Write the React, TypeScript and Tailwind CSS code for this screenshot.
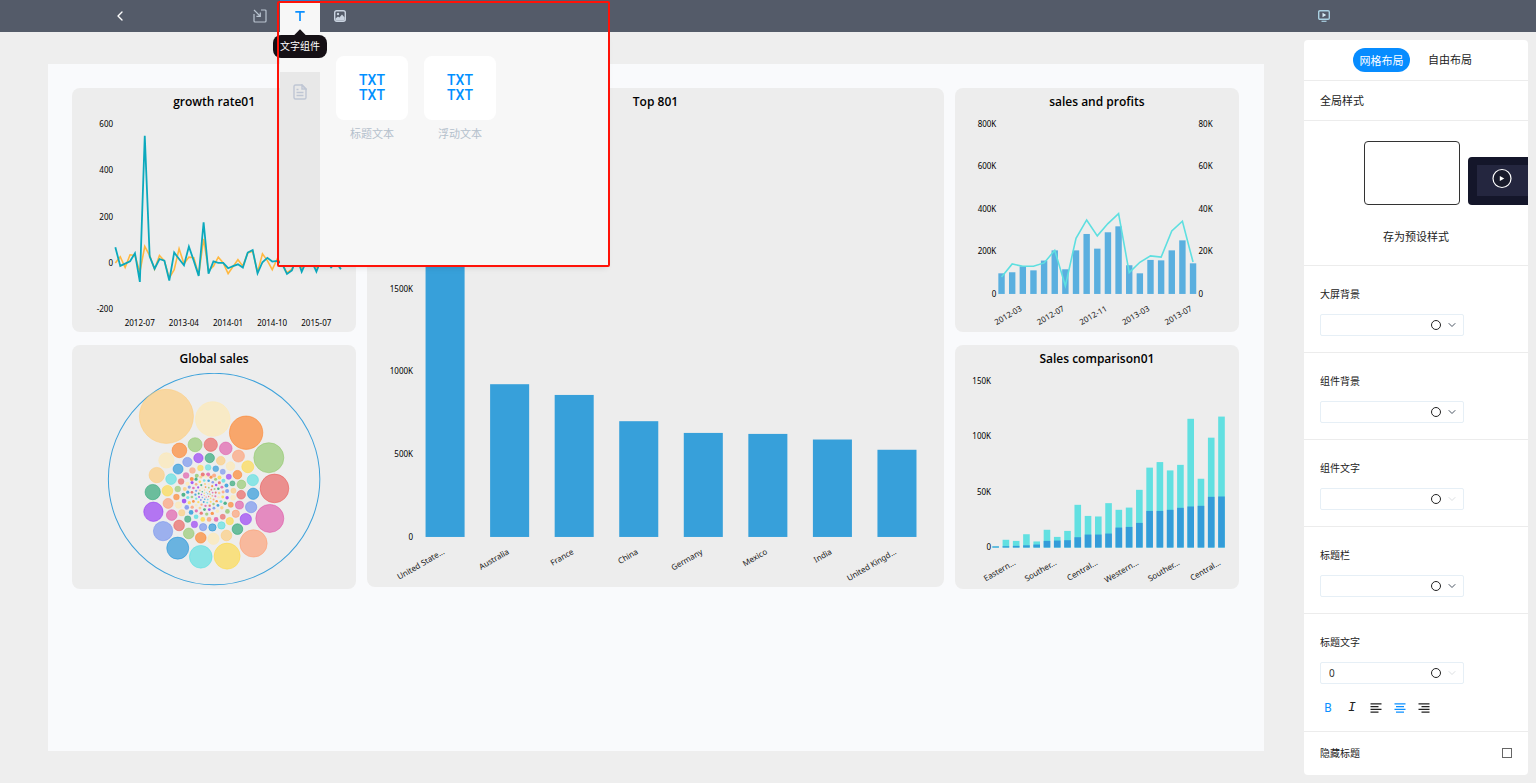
import clsx from "clsx";
import { FiChevronDown, FiChevronLeft } from "react-icons/fi";

const growthSales = [
  68, -13, -3, 7, 42, -82, 550, 29, -25, 17, 10, -76, 45, 17, -10, 71, 9, -56,
  176, -46, 7, 0, 0, -23, -14, -6, -20, 45, 56, -45, 3, 22, 6, 9, -3, -48, -33,
  25, -38, 10, 10, -38, 17, 10, -19, 2, -27,
];

const growthProfit = [
  0, 27, -20, 35, 32, -40, 72, 32, -27, 32, 9, -65, -29, 61, -4, 25, 22, -52,
  104, -33, -14, 25, 0, -46, -16, 14, -14, 43, 51, -40, 39, 10, -29, 17, -3,
  -43, -27, 20, -20, 15, 12, -20, 20, 12, -10, 8, -20,
];

const countries = [
  { name: "United State...", sales: 2490 },
  { name: "Australia", sales: 925 },
  { name: "France", sales: 860 },
  { name: "China", sales: 701 },
  { name: "Germany", sales: 630 },
  { name: "Mexico", sales: 624 },
  { name: "India", sales: 590 },
  { name: "United Kingd...", sales: 528 },
];

const monthlySales = [
  97, 102, 130, 111, 157, 205, 116, 205, 282, 213, 290, 318, 135, 97, 160, 158,
  205, 252, 144,
];

const monthlyProfit = [
  8, 14.1, 13, 13, 14.6, 20.5, 3.8, 26.2, 34.8, 27.3, 33.1, 37.8, 10, 14.9,
  17.9, 17.3, 29.6, 34.2, 15,
];

const regionTotal = [
  1, 7, 6, 12, 5.5, 16, 9.6, 15, 38.5, 28.5, 28, 40, 34, 36, 52, 72, 77, 69.5,
  74.5, 116, 62, 99, 118,
];

const regionBase = [
  1, 1.2, 1.5, 2, 2.7, 6, 6.3, 6.6, 9.3, 11.7, 11.7, 12.6, 18, 18.6, 22.2, 33,
  33, 34, 35.8, 37, 37.6, 45.7, 46,
];

const bubbleColors = [
  "#ffc972",
  "#ffe9ae",
  "#ff7b1c",
  "#8cc665",
  "#ea5654",
  "#de4fa5",
  "#ff9a6c",
  "#ffd93f",
  "#4fdfe0",
  "#1890d8",
  "#6b8aef",
  "#8f2cf5",
  "#1ba06b",
];

// [x, y, r], from the biggest bubble inwards
const bubbles = [
  [199, 229, 81], [338, 237, 52], [438, 278, 50], [506, 353, 45],
  [523, 445, 43], [509, 535, 42], [460, 610, 41], [381, 648, 39],
  [302, 650, 34], [233, 624, 33], [189, 573, 29], [160, 515, 29],
  [158, 456, 23], [170, 405, 23], [199, 361, 23], [238, 331, 22],
  [285, 314, 21], [332, 314, 20], [377, 325, 19], [415, 348, 18],
  [443, 380, 18], [458, 420, 17], [459, 461, 17], [453, 501, 17],
  [437, 537, 17], [412, 567, 16], [379, 586, 16], [340, 596, 17],
  [302, 593, 16], [266, 580, 16], [237, 556, 16], [215, 525, 16],
  [204, 490, 15], [202, 452, 16], [213, 417, 16], [234, 387, 15],
  [262, 366, 14], [295, 354, 14], [329, 354, 14], [362, 362, 13],
  [391, 378, 13], [412, 404, 13], [424, 433, 13], [423, 464, 13],
  [418, 495, 12], [407, 521, 11], [389, 543, 11], [364, 556, 11],
  [337, 562, 11], [309, 561, 11], [283, 553, 10], [263, 537, 10],
  [245, 518, 10], [235, 495, 10], [229, 471, 9], [233, 447, 9],
  [243, 424, 9], [258, 406, 9], [277, 391, 9], [301, 384, 9],
  [324, 382, 9], [347, 386, 9], [368, 395, 8], [386, 410, 8],
  [397, 430, 8], [400, 452, 8], [399, 473, 8], [392, 494, 8],
  [382, 514, 7], [368, 530, 8], [348, 538, 7], [327, 538, 7],
  [308, 538, 7], [288, 530, 7], [273, 517, 7], [260, 502, 7],
  [252, 483, 7], [250, 464, 6], [254, 447, 6], [262, 431, 6],
  [275, 417, 6], [290, 407, 6], [308, 403, 6], [324, 403, 6],
  [342, 406, 6], [358, 412, 6], [370, 422, 6], [379, 436, 6],
  [381, 453, 6],
];

// the tail of the list winds to the centre in ever shorter turns
let angle = 0.18;
let dist = 63;
while (dist > 3) {
  bubbles.push([
    319 + dist * Math.cos(angle),
    462 + dist * Math.sin(angle),
    1.4 + dist * 0.06,
  ]);
  const step = (6.5 + dist * 0.17) / dist;
  angle += step;
  dist -= ((6 + dist * 0.13) * step) / (2 * Math.PI);
}

const AxisText = ({ x, y, anchor = "end", rotate = false, children }: any) => (
  <text
    x={x}
    y={y}
    textAnchor={anchor}
    transform={rotate ? `rotate(-30 ${x} ${y})` : undefined}
    className={clsx("text-[8px]", rotate ? "fill-[#222]" : "fill-black")}
  >
    {children}
  </text>
);

const ChartCard = ({ title, className, viewBox, children }: any) => (
  <section
    className={clsx("self-start rounded-lg bg-[#ededed] overflow-hidden", className)}
  >
    <h3 className="text-center font-['Open_Sans'] text-xs leading-7 font-semibold text-black">
      {title}
    </h3>
    <svg viewBox={viewBox} className="block w-full h-auto">
      {children}
    </svg>
  </section>
);

const growthPoints = (data: number[]) =>
  data.map((v, i) => `${43.3 + i * 4.9},${146.8 - v * 0.231}`).join(" ");

const GrowthChart = () => (
  <ChartCard title="growth rate01" viewBox="0 0 284 216">
    {[600, 400, 200, 0, -200].map((v) => (
      <AxisText key={v} x={41} y={149.8 - v * 0.231}>
        {v}
      </AxisText>
    ))}
    {["2012-07", "2013-04", "2014-01", "2014-10", "2015-07"].map((d, i) => (
      <AxisText key={d} x={67.7 + i * 44.1} y={209.6} anchor="middle">
        {d}
      </AxisText>
    ))}
    <polyline
      points={growthPoints(growthProfit)}
      fill="none"
      stroke="#ffb840"
      strokeWidth="1.6"
    />
    <polyline
      points={growthPoints(growthSales)}
      fill="none"
      stroke="#0ba9bd"
      strokeWidth="1.8"
    />
  </ChartCard>
);

const TopChart = () => (
  <ChartCard
    title="Top 801"
    viewBox="0 0 576 471"
    className="col-start-2 row-start-1 row-span-2"
  >
    {[2500, 2000, 1500, 1000, 500, 0].map((v) => (
      <AxisText key={v} x={46} y={423.2 - v * 0.165}>
        {v ? `${v}K` : 0}
      </AxisText>
    ))}
    {countries.map((c, i) => (
      <g key={c.name}>
        <rect
          x={58.5 + i * 64.5}
          y={420.6 - c.sales * 0.165}
          width="39"
          height={c.sales * 0.165}
          fill="#37a0da"
        />
        <AxisText x={78 + i * 64.5} y={437} rotate>
          {c.name}
        </AxisText>
      </g>
    ))}
  </ChartCard>
);

const ProfitChart = () => (
  <ChartCard title="sales and profits" viewBox="0 0 284 216">
    {[800, 600, 400, 200, 0].map((v) => (
      <g key={v}>
        <AxisText x={41.3} y={180.8 - v * 0.2125}>
          {v ? `${v}K` : 0}
        </AxisText>
        <AxisText x={243.3} y={180.8 - v * 0.2125} anchor="start">
          {v ? `${v / 10}K` : 0}
        </AxisText>
      </g>
    ))}
    {monthlySales.map((v, i) => (
      <rect
        key={i}
        x={43.3 + i * 10.63}
        y={177.8 - v * 0.2125}
        width="6.4"
        height={v * 0.2125}
        fill="#5aafdf"
      />
    ))}
    <polyline
      points={monthlyProfit
        .map((v, i) => `${46.5 + i * 10.63},${177.8 - v * 2.125}`)
        .join(" ")}
      fill="none"
      stroke="#5edfe0"
      strokeWidth="1.6"
    />
    {["2012-03", "2012-07", "2012-11", "2013-03", "2013-07"].map((d, i) => (
      <AxisText key={d} x={67.5 + i * 42.5} y={194} rotate>
        {d}
      </AxisText>
    ))}
  </ChartCard>
);

const ComparisonChart = () => (
  <ChartCard title="Sales comparison01" viewBox="0 0 284 216">
    {[150, 100, 50, 0].map((v) => (
      <AxisText key={v} x={36} y={177 - v * 1.109}>
        {v ? `${v}K` : 0}
      </AxisText>
    ))}
    {regionTotal.map((v, i) => (
      <g key={i}>
        <rect
          x={37.3 + i * 10.257}
          y={174.4 - v * 1.109}
          width="6.6"
          height={v * 1.109}
          fill="#62e0e1"
        />
        <rect
          x={37.3 + i * 10.257}
          y={174.4 - regionBase[i] * 1.109}
          width="6.6"
          height={regionBase[i] * 1.109}
          fill="#349cd9"
        />
      </g>
    ))}
    {["Eastern...", "Souther...", "Central...", "Western...", "Souther...", "Central..."].map(
      (r, i) => (
        <AxisText key={i} x={61 + i * 41} y={191} rotate>
          {r}
        </AxisText>
      )
    )}
  </ChartCard>
);

const BubbleChart = () => (
  <ChartCard title="Global sales" viewBox="0 0 284 216">
    <g transform="translate(28 -33) scale(0.3333)">
      <circle cx="342" cy="417" r="317" fill="none" stroke="#3da2db" strokeWidth="3" />
      {bubbles.map(([x, y, r], i) => (
        <circle
          key={i}
          cx={x}
          cy={y}
          r={r}
          fill={bubbleColors[i % 13]}
          fillOpacity={r > 7 ? 0.62 : 0.75}
          stroke={r > 7 ? bubbleColors[i % 13] : "none"}
          strokeOpacity="0.6"
          strokeWidth={r > 10 ? 2.5 : 1}
        />
      ))}
    </g>
  </ChartCard>
);

const ImportIcon = () => (
  <svg viewBox="0 0 14 14" className="w-3.5 h-3.5" fill="none" stroke="#b9c4d0" strokeWidth="1.2">
    <path d="M1 5v7q0 1 1 1h10q1 0 1-1V2q0-1-1-1H8" />
    <path d="M1 1l6 6M7.3 3.4v3.9H3.4" />
  </svg>
);

const PictureIcon = () => (
  <svg viewBox="0 0 12 12" className="w-3 h-3">
    <rect x="0.7" y="0.7" width="10.6" height="10.6" rx="2" fill="none" stroke="#c9d3e0" strokeWidth="1.4" />
    <circle cx="4" cy="4" r="1.2" fill="#c9d3e0" />
    <path d="M1.5 10.5V8.6L4 6.4l1.4 1.2L8 4.4l2.6 3v3.1z" fill="#c9d3e0" />
  </svg>
);

const PresentIcon = () => (
  <svg viewBox="0 0 12 12" className="w-3 h-3">
    <rect x="0.7" y="0.7" width="10.6" height="8.6" rx="1.2" fill="none" stroke="#a9cfe0" strokeWidth="1.4" />
    <path d="M4.5 2.8L8.2 5 4.5 7.2z" fill="#d7ecf5" />
    <path d="M3.5 11.3h5" stroke="#a9cfe0" strokeWidth="1.2" />
  </svg>
);

const DocIcon = () => (
  <svg viewBox="0 0 14 16" className="w-3.5 h-4" fill="none" stroke="#bfc6d4" strokeWidth="1.4">
    <path d="M9 1H2.5Q1 1 1 2.5v11Q1 15 2.5 15h9q1.5 0 1.5-1.5V5z" />
    <path d="M9 1l4 4H9zM3.5 5.5h2M3.5 8.5h7M3.5 11.5h7" />
  </svg>
);

const AlignIcon = ({ align }: { align: "left" | "center" | "right" }) => {
  const x = { left: 0.5, center: 2, right: 3.5 }[align];
  return (
    <svg viewBox="0 0 12 10" className="w-3 h-2.5" stroke="currentColor" strokeWidth="1.3">
      <path d={`M0.5 0.8h11M${x} 3.6h8M0.5 6.4h11M${x} 9.2h8`} />
    </svg>
  );
};

const TextPanel = () => (
  <div className="absolute left-0 top-full z-10 flex w-[328px] h-[233px] bg-[#f7f7f7] shadow-md">
    <div className="mt-10 w-10 bg-[#e8e8e8]">
      <button aria-label="文本" className="flex w-10 h-10 items-center justify-center">
        <DocIcon />
      </button>
    </div>
    <div className="flex items-start gap-4 pt-6 pl-4">
      {["标题文本", "浮动文本"].map((name) => (
        <button key={name} className="flex flex-col items-center gap-1.5">
          <span className="flex w-[72px] h-16 flex-col items-center justify-center rounded-lg bg-white font-[Roboto] text-sm leading-[15px] font-medium text-[#0090ff]">
            <span>TXT</span>
            <span>TXT</span>
          </span>
          <span className="text-[11px] leading-4 text-[#b4c0cc]">{name}</span>
        </button>
      ))}
    </div>
  </div>
);

const Header = () => (
  <header className="flex h-8 bg-[#545b69]">
    <button aria-label="返回" className="ml-[100px] flex w-10 items-center justify-center text-white">
      <FiChevronLeft className="w-4 h-4" />
    </button>
    <button aria-label="导入" className="ml-[100px] flex w-10 items-center justify-center">
      <ImportIcon />
    </button>
    <div className="relative w-10">
      <button
        aria-label="文字组件"
        className="flex w-10 h-8 items-center justify-center border-t-2 border-[#2f7fca] bg-[#f7f7f7] pb-0.5"
      >
        <svg viewBox="0 0 10 10" className="w-2.5 h-2.5" stroke="#0c90ff" strokeWidth="1.7">
          <path d="M0.3 0.9h9.4M5 0.9V10" />
        </svg>
      </button>
      <TextPanel />
      <div
        role="tooltip"
        className="absolute left-1/2 top-[35px] z-20 -translate-x-1/2 whitespace-nowrap rounded-lg bg-[#151015] px-[7px] text-[10px] leading-[23px] text-white"
      >
        <span className="absolute left-1/2 -top-1 w-2 h-2 -translate-x-1/2 rotate-45 bg-[#151015]" />
        <span className="relative">文字组件</span>
      </div>
      {/* highlight frame */}
      <div className="pointer-events-none absolute -left-[3px] top-px z-30 w-[333px] h-[266px] rounded-xs border-2 border-[#ff1208]" />
    </div>
    <button aria-label="图片" className="flex w-10 items-center justify-center">
      <PictureIcon />
    </button>
    <button aria-label="预览" className="ml-auto mr-48 flex w-10 items-center justify-center">
      <PresentIcon />
    </button>
  </header>
);

const StyleField = ({ id, label, value = "", muted = false, children }: any) => (
  <div className="border-b border-[#ececec] px-4 pt-[21px]">
    <label htmlFor={id} className="block text-[10px] leading-[14px] text-[#222]">
      {label}
    </label>
    <div className="mt-[13px] mb-4 flex w-36 h-[22px] items-center rounded-xs border border-[#e6eff6] pr-[3px]">
      <input
        id={id}
        defaultValue={value}
        className="min-w-0 flex-1 pl-2 text-[10px] text-[#333] outline-none"
      />
      <button aria-label={`${label}颜色`} className="flex w-4 justify-center">
        <span className="w-2.5 h-2.5 rounded-full border border-[#222]" />
      </button>
      <button
        aria-label={`${label}选项`}
        className={clsx("flex w-4 justify-center", muted ? "text-[#dcdfe2]" : "text-[#4a5563]")}
      >
        <FiChevronDown className="w-3 h-3" />
      </button>
    </div>
    {children}
  </div>
);

const Sidebar = () => (
  <aside className="my-2 mr-2 w-56 shrink-0 overflow-hidden rounded-sm bg-white text-[#222]">
    <div className="flex h-[41px] items-center border-b border-[#ececec] pl-[49px]">
      <button className="w-[57px] h-6 rounded-full bg-[#078cff] text-[11px] leading-[26px] text-white">
        网格布局
      </button>
      <button className="ml-[18px] text-[11px] leading-[26px]">自由布局</button>
    </div>
    <h2 className="h-10 border-b border-[#ececec] pl-4 text-[11px] leading-10">
      全局样式
    </h2>
    <div className="border-b border-[#ececec] pt-5 pb-5">
      <div className="flex items-end gap-2 overflow-hidden pl-[60px]">
        <button aria-label="浅色预设" className="w-24 h-16 shrink-0 rounded-sm border border-[#333]" />
        <button aria-label="深色预设" className="shrink-0">
          <svg viewBox="0 0 72 48" className="block w-[72px] h-12">
            <rect width="72" height="48" rx="4" fill="#14162a" />
            <rect x="9" y="8" width="63" height="31" fill="#24263f" />
            <circle cx="34" cy="21.5" r="9" fill="#191b2c" stroke="#fff" strokeWidth="1.2" />
            <path d="M31.8 19l4.5 2.5-4.5 2.5z" fill="#fff" />
          </svg>
        </button>
      </div>
      <button className="mx-auto mt-6 block text-[11px] leading-4">
        存为预设样式
      </button>
    </div>
    <StyleField id="screen-bg" label="大屏背景" />
    <StyleField id="widget-bg" label="组件背景" />
    <StyleField id="widget-text" label="组件文字" muted />
    <StyleField id="title-bar" label="标题栏" />
    <StyleField id="title-text" label="标题文字" value="0" muted>
      <div className="-mt-1 mb-[11px] -ml-1 flex">
        <button className="w-6 h-6 font-[Roboto] text-xs text-[#0c90ff]">
          B
        </button>
        <button className="w-6 h-6 font-['Liberation_Mono'] text-[13px] italic">
          I
        </button>
        <button aria-label="左对齐" className="flex w-6 h-6 items-center justify-center">
          <AlignIcon align="left" />
        </button>
        <button aria-label="居中" className="flex w-6 h-6 items-center justify-center text-[#0c90ff]">
          <AlignIcon align="center" />
        </button>
        <button aria-label="右对齐" className="flex w-6 h-6 items-center justify-center">
          <AlignIcon align="right" />
        </button>
      </div>
    </StyleField>
    <label className="flex h-[42px] items-center justify-between px-4 text-[10px]">
      隐藏标题
      <input
        type="checkbox"
        className="w-2.5 h-2.5 appearance-none border border-[#666] bg-white checked:bg-[#078cff]"
      />
    </label>
  </aside>
);

const App = () => {
  return (
    <div className="flex min-h-screen flex-col bg-[#eeeeee] font-['Noto_Sans','Noto_Sans_CJK_SC',sans-serif]">
      <Header />
      <div className="flex flex-1 gap-10 pl-12">
        <main className="my-8 grid min-w-0 flex-1 content-start grid-cols-[71fr_144fr_71fr] gap-x-[11px] gap-y-[13px] bg-[#f9fafc] py-6 pl-6 pr-[25px]">
          <GrowthChart />
          <TopChart />
          <ProfitChart />
          <BubbleChart />
          <ComparisonChart />
        </main>
        <Sidebar />
      </div>
    </div>
  );
};

export default App;
